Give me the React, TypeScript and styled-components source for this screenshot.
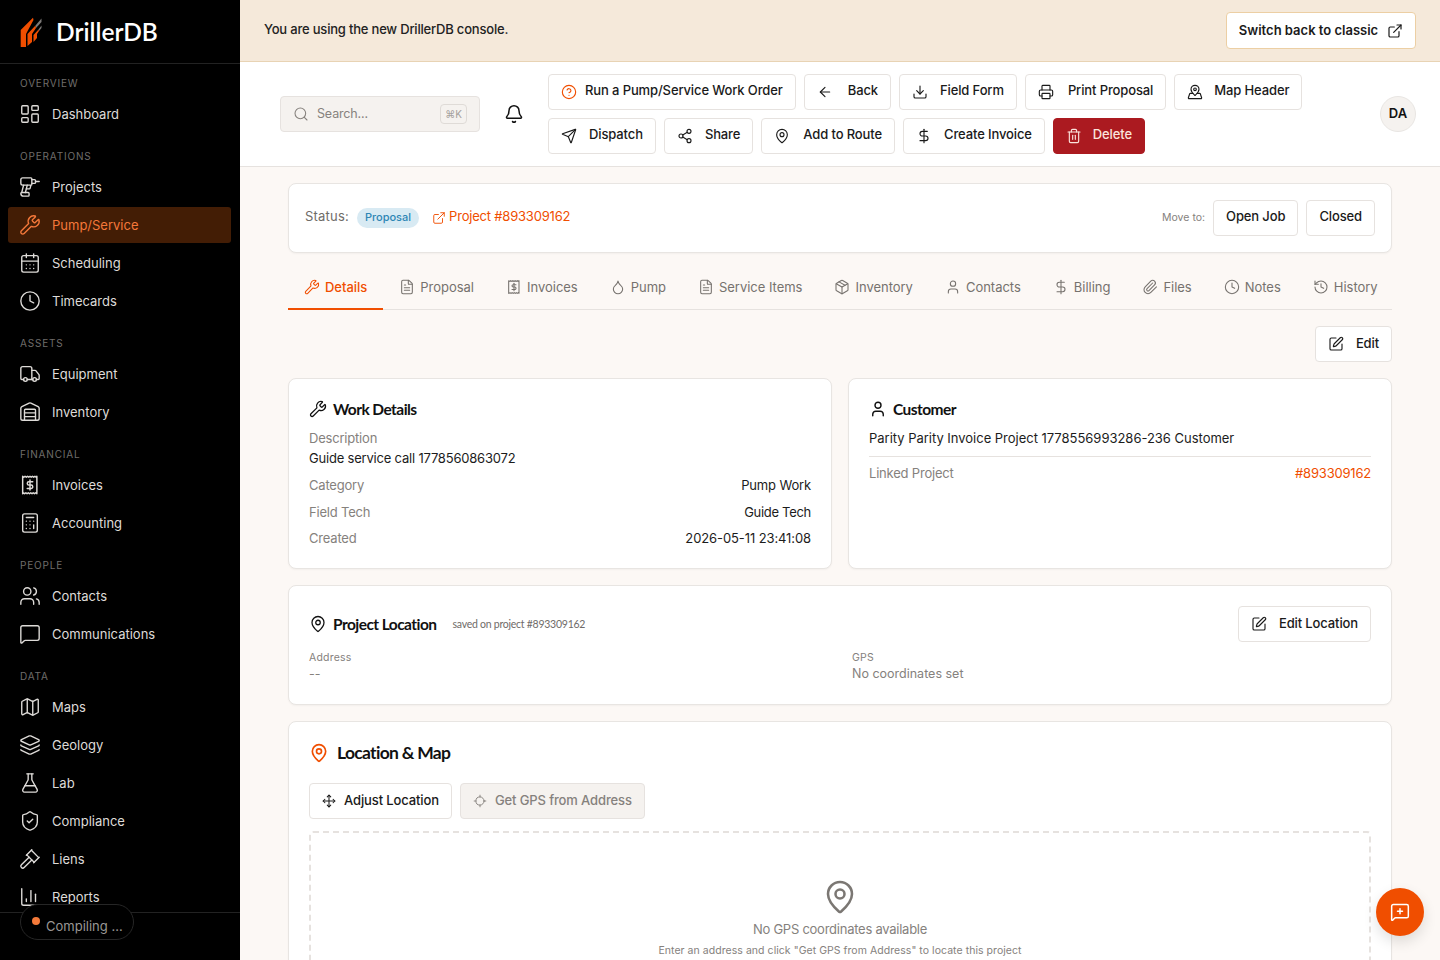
import React from 'react';
import styled, { createGlobalStyle } from 'styled-components';
import {
  ArrowLeft, Bell, Calculator, CalendarDays, ChartColumn, CircleHelp, Clock, DollarSign, Download, Drill,
  Droplet, ExternalLink, FileText, FlaskConical, Gavel, History, Layers, LayoutDashboard, Locate,
  Map as MapIcon, MapPin, MapPinned, MessageSquare, MessageSquarePlus, Move, Package, Paperclip, Printer,
  Search, Send, Share2, ShieldCheck, SquarePen, Trash2, Truck, User, Users, Warehouse, Wrench,
} from 'lucide-react';

const GlobalStyle = createGlobalStyle`
  * { box-sizing: border-box; }
  html, body { margin: 0; height: 100%; overflow: hidden; }
  body { font-family: Inter, "Liberation Sans", sans-serif; font-size: 13px; color: #111; background: #fcf8f5; }
`;

const HEADING = `Lato, Inter, sans-serif`;

const InvoiceIcon = ({ size = 24 }: { size?: number }) => (
  <svg width={size} height={size} viewBox="0 0 24 24" fill="none" stroke="currentColor" strokeWidth="1.6" strokeLinecap="round" strokeLinejoin="round">
    <path d="M4 2.5l1.3 1 1.3-1 1.4 1 1.3-1 1.4 1 1.3-1 1.3 1 1.4-1 1.3 1 1.4-1 1.3 1 .8-1V21.5l-1.3-1-1.3 1-1.4-1-1.3 1-1.4-1-1.3 1-1.3-1-1.4 1-1.3-1-1.4 1-1.3-1-.8 1z" />
    <path d="M15 8.5H10.8a1.8 1.8 0 0 0 0 3.6h2.4a1.8 1.8 0 0 1 0 3.6H9" />
    <path d="M12 6.5v11" />
  </svg>
);

const Logo = () => (
  <svg width="24" height="30" viewBox="0 0 24 30">
    <polygon fill="#f04e00" points="0.7,30 6,30 6,17 13.5,3 13,0.8 0.7,13" />
    <polygon fill="#f04e00" points="7.5,29 12,25 12,17 16,11 15.5,8.5 7.5,17" />
    <polygon fill="#7d7a78" points="15.5,8.5 16,11 21.5,5 21.5,1.5" />
    <polygon fill="#f04e00" points="13.5,25 17,21 17,17 19,14 18.5,12.5 13.5,18" />
    <polygon fill="#7d7a78" points="18.5,12.5 19,14 21.5,11 21.5,8.5" />
  </svg>
);

const Shell = styled.div`
  display: flex;
  height: 100vh;
  overflow: hidden;
`;

const Sidebar = styled.aside`
  width: 240px;
  flex: none;
  background: #000;
  display: flex;
  flex-direction: column;
  height: 100%;
`;

const Brand = styled.div`
  height: 64px;
  flex: none;
  display: flex;
  align-items: center;
  gap: 12px;
  padding: 0 20px;
  border-bottom: 1px solid #222;
  color: #fff;
  font: 600 24.5px ${HEADING};
`;

const Nav = styled.nav`
  flex: 1;
  min-height: 0;
  overflow: hidden;
  padding: 12px 9px 0 8px;
`;

const NavGroup = styled.div`
  margin-bottom: 17px;
`;

const NavLabel = styled.div`
  height: 14px;
  line-height: 14px;
  margin-bottom: 6px;
  padding-left: 12px;
  font-size: 10px;
  letter-spacing: 0.82px;
  color: #6f6d6b;
`;

const NavRow = styled.div<{ $active?: boolean }>`
  height: 36px;
  margin-bottom: 2px;
  display: flex;
  align-items: center;
  gap: 11px;
  padding-left: 11px;
  border-radius: 3px;
  font-size: 13px;
  color: ${({ $active }) => ($active ? '#f4783a' : '#dedbd8')};
  background: ${({ $active }) => ($active ? '#431d05' : 'transparent')};
  svg { flex: none; }
`;

const SideFooter = styled.div`
  height: 48px;
  flex: none;
  border-top: 1px solid #222;
`;

const CompilePill = styled.div`
  position: fixed;
  left: 20px;
  top: 904px;
  width: 114px;
  height: 36px;
  border-radius: 18px;
  border: 1px solid #262626;
  background: #000;
  display: flex;
  align-items: center;
  padding-left: 11px;
  gap: 6px;
  color: #9a9794;
  font-size: 13px;
`;

const Dot = styled.span`
  width: 8px;
  height: 8px;
  border-radius: 50%;
  background: #f47a3a;
  margin-top: -3px;
`;

const CompileText = styled.span`
  margin-top: 7px;
`;

const Main = styled.main`
  flex: 1;
  min-width: 0;
  display: flex;
  flex-direction: column;
  height: 100%;
  overflow: hidden;
`;

const Banner = styled.div`
  height: 62px;
  flex: none;
  background: #f5e9da;
  border-bottom: 1px solid #e8d3b4;
  display: flex;
  align-items: center;
  justify-content: space-between;
  padding: 0 24px;
  font-size: 13px;
  font-weight: 500;
  letter-spacing: -0.2px;
  color: #222;
`;

const BannerText = styled.span`
  margin-bottom: 4px;
`;

const ClassicButton = styled.button`
  height: 37px;
  width: 190px;
  display: flex;
  align-items: center;
  justify-content: center;
  gap: 9px;
  background: #fff;
  border: 1px solid #eccfa4;
  border-radius: 4px;
  font: 600 13px Inter, sans-serif;
  color: #1a1a1a;
`;

const Header = styled.header`
  height: 105px;
  flex: none;
  background: #fff;
  border-bottom: 1px solid #e6e2df;
  display: flex;
  align-items: center;
  padding: 0 24px 0 40px;
`;

const SearchBox = styled.div`
  width: 200px;
  height: 36px;
  flex: none;
  display: flex;
  align-items: center;
  gap: 8px;
  padding: 0 12px;
  background: #f5f2ef;
  border: 1px solid #e6e2df;
  border-radius: 4px;
  color: #87827e;
  font-size: 12.5px;
  letter-spacing: -0.15px;
`;

const SearchText = styled.span`
  flex: 1;
  margin-bottom: 2px;
`;

const Kbd = styled.span`
  width: 27px;
  height: 20px;
  display: flex;
  align-items: center;
  justify-content: center;
  border: 1px solid #dfdbd7;
  border-radius: 4px;
  font-size: 10px;
  color: #a5a19d;
`;

const BellWrap = styled.div`
  width: 68px;
  flex: none;
  display: flex;
  justify-content: center;
  color: #111;
`;

const Actions = styled.div`
  width: 800px;
  flex: none;
  display: flex;
  flex-wrap: wrap;
  gap: 8px;
`;

const Button = styled.button<{ $gap?: number; $danger?: boolean; $muted?: boolean }>`
  height: 36px;
  display: inline-flex;
  align-items: center;
  gap: ${({ $gap }) => $gap ?? 12}px;
  padding: 0 12px;
  font: 500 13px Inter, sans-serif;
  letter-spacing: -0.12px;
  white-space: nowrap;
  border-radius: 4px;
  border: 1px solid ${({ $danger }) => ($danger ? '#ab1a20' : '#e6e2df')};
  background: ${({ $danger, $muted }) => ($danger ? '#ab1a20' : $muted ? '#f5f2ef' : '#fff')};
  color: ${({ $danger, $muted }) => ($danger ? '#fbe4dc' : $muted ? '#85817d' : '#1a1a1a')};
  svg { flex: none; }
`;

const Label = styled.span<{ $lift?: number }>`
  margin-bottom: ${({ $lift }) => ($lift ?? 2) * 2}px;
`;

const Avatar = styled.div`
  width: 36px;
  height: 36px;
  margin-left: auto;
  padding-bottom: 2px;
  border-radius: 50%;
  background: #f5f2ef;
  border: 1px solid #e9e6e3;
  display: flex;
  align-items: center;
  justify-content: center;
  font-size: 13px;
  font-weight: 600;
`;

const Content = styled.div`
  flex: 1;
  min-height: 0;
  overflow: hidden;
  padding: 16px 48px 0;
  display: flex;
  flex-direction: column;
`;

const Card = styled.section`
  background: #fff;
  border: 1px solid #e8e5e2;
  border-radius: 8px;
  box-shadow: 0 1px 2px rgba(0, 0, 0, 0.04);
`;

const StatusCard = styled(Card)`
  height: 70px;
  flex: none;
  display: flex;
  align-items: center;
  padding: 0 16px;
`;

const StatusLabel = styled.span`
  color: #6f6b68;
  font-size: 13px;
  letter-spacing: 0.2px;
  margin: 0 8px 4px 0;
`;

const Pill = styled.span`
  height: 20px;
  padding: 0 8px 2px;
  display: inline-flex;
  align-items: center;
  border-radius: 10px;
  background: #d8eaf3;
  color: #2e86b5;
  font-size: 11px;
  font-weight: 500;
`;

const ProjectLink = styled.a`
  display: inline-flex;
  align-items: center;
  gap: 3px;
  margin-left: 13px;
  color: #f04e00;
  font-size: 13px;
  letter-spacing: -0.2px;
`;

const MoveTo = styled.div`
  margin-left: auto;
  display: flex;
  align-items: center;
  gap: 8px;
`;

const MoveLabel = styled.span`
  font-size: 10.5px;
  color: #85817d;
  margin-bottom: 1px;
`;

const Tabs = styled.div`
  margin-top: 13px;
  height: 44px;
  flex: none;
  display: flex;
  border-bottom: 1px solid #e6e2df;
`;

const Tab = styled.div<{ $active?: boolean }>`
  height: 44px;
  display: flex;
  align-items: center;
  gap: 5px;
  padding: 0 16px;
  white-space: nowrap;
  font-size: 13px;
  letter-spacing: -0.02px;
  font-weight: ${({ $active }) => ($active ? 500 : 400)};
  color: ${({ $active }) => ($active ? '#f04e00' : '#76726e')};
  border-bottom: 2px solid ${({ $active }) => ($active ? '#f04e00' : 'transparent')};
`;

const EditRow = styled.div`
  margin: 16px 0;
  flex: none;
  display: flex;
  justify-content: flex-end;
`;

const TwoCols = styled.div`
  display: grid;
  grid-template-columns: 1fr 1fr;
  gap: 16px;
  flex: none;
`;

const InfoCard = styled(Card)`
  height: 191px;
  padding: 21px 20px 20px;
`;

const CardTitle = styled.h3<{ $large?: boolean }>`
  margin: 0;
  display: flex;
  align-items: center;
  gap: ${({ $large }) => ($large ? 8 : 6)}px;
  font: 700 ${({ $large }) => ($large ? 17.5 : 15.5)}px ${HEADING};
  letter-spacing: ${({ $large }) => ($large ? -0.7 : -0.55)}px;
  color: #111;
`;

const Muted = styled.div`
  color: #85817d;
  font-size: 13px;
  letter-spacing: -0.2px;
`;

const Value = styled.div<{ $spacing?: number }>`
  color: #1c1c1c;
  font-size: 13px;
  letter-spacing: ${({ $spacing }) => $spacing ?? -0.02}px;
`;

const DescBlock = styled.div`
  margin-top: 10px;
  line-height: 20px;
`;

const KV = styled.div`
  display: flex;
  justify-content: space-between;
  height: 26.4px;
  align-items: center;
`;

const KVList = styled.div`
  margin-top: 4px;
`;

const CustomerName = styled(Value)`
  margin-top: 10px;
  line-height: 20px;
  padding-bottom: 8px;
  border-bottom: 1px solid #e6e2df;
`;

const LinkedRow = styled.div`
  display: flex;
  justify-content: space-between;
  margin-top: 7px;
  line-height: 18px;
`;

const OrangeText = styled.span`
  color: #f04e00;
  letter-spacing: -0.2px;
`;

const LocationCard = styled(Card)`
  margin-top: 16px;
  height: 120px;
  flex: none;
  padding: 20px;
`;

const LocationHead = styled.div`
  display: flex;
  align-items: center;
  height: 36px;
`;

const SavedNote = styled.span`
  margin-left: 16px;
  font: 400 10.5px ${HEADING};
  letter-spacing: -0.25px;
  color: #6f6b68;
`;

const PushRight = styled.div`
  margin-left: auto;
`;

const AddressGrid = styled.div`
  display: grid;
  grid-template-columns: 1fr 1fr;
  column-gap: 24px;
  margin-top: 9px;
`;

const SmallLabel = styled.div`
  color: #85817d;
  font-size: 10.5px;
  letter-spacing: 0.2px;
  line-height: 14px;
`;

const SmallValue = styled.div`
  color: #85817d;
  font-size: 12.5px;
  line-height: 18px;
`;

const MapCard = styled(Card)`
  margin-top: 16px;
  flex: none;
  padding: 20px;
  height: 320px;
`;

const MapTitleRow = styled.div`
  height: 24px;
`;

const MapButtons = styled.div`
  display: flex;
  gap: 8px;
  margin-top: 17px;
`;

const EmptyMap = styled.div`
  margin-top: 12px;
  height: 240px;
  border: 2px dashed #e6e2df;
  border-radius: 4px;
  display: flex;
  flex-direction: column;
  align-items: center;
  padding-top: 46px;
  color: #7b7773;
`;

const EmptyTitle = styled.div`
  margin-top: 6px;
  font-size: 13px;
  letter-spacing: -0.25px;
  color: #85817d;
`;

const EmptyHint = styled.div`
  margin-top: 7px;
  font-size: 10.5px;
  letter-spacing: 0.05px;
  color: #85817d;
`;

const Fab = styled.button`
  position: fixed;
  left: 1376px;
  top: 888px;
  width: 48px;
  height: 48px;
  border-radius: 50%;
  border: none;
  background: #f04e00;
  color: #fff;
  display: flex;
  align-items: center;
  justify-content: center;
  box-shadow: 0 6px 14px rgba(0, 0, 0, 0.12);
`;

const navGroups = [
  { label: 'OVERVIEW', items: [{ name: 'Dashboard', icon: <LayoutDashboard size={22} strokeWidth={1.5} /> }] },
  {
    label: 'OPERATIONS',
    items: [
      { name: 'Projects', icon: <Drill size={22} strokeWidth={1.5} /> },
      { name: 'Pump/Service', icon: <Wrench size={22} strokeWidth={1.5} />, active: true },
      { name: 'Scheduling', icon: <CalendarDays size={22} strokeWidth={1.5} /> },
      { name: 'Timecards', icon: <Clock size={22} strokeWidth={1.5} /> },
    ],
  },
  {
    label: 'ASSETS',
    items: [
      { name: 'Equipment', icon: <Truck size={22} strokeWidth={1.5} /> },
      { name: 'Inventory', icon: <Warehouse size={22} strokeWidth={1.5} /> },
    ],
  },
  {
    label: 'FINANCIAL',
    items: [
      { name: 'Invoices', icon: <InvoiceIcon size={22} /> },
      { name: 'Accounting', icon: <Calculator size={22} strokeWidth={1.5} /> },
    ],
  },
  {
    label: 'PEOPLE',
    items: [
      { name: 'Contacts', icon: <Users size={22} strokeWidth={1.5} /> },
      { name: 'Communications', icon: <MessageSquare size={22} strokeWidth={1.5} /> },
    ],
  },
  {
    label: 'DATA',
    items: [
      { name: 'Maps', icon: <MapIcon size={22} strokeWidth={1.5} /> },
      { name: 'Geology', icon: <Layers size={22} strokeWidth={1.5} /> },
      { name: 'Lab', icon: <FlaskConical size={22} strokeWidth={1.5} /> },
      { name: 'Compliance', icon: <ShieldCheck size={22} strokeWidth={1.5} /> },
      { name: 'Liens', icon: <Gavel size={22} strokeWidth={1.5} /> },
      { name: 'Reports', icon: <ChartColumn size={22} strokeWidth={1.5} /> },
    ],
  },
];

const tabs = [
  { name: 'Details', icon: <Wrench size={16} strokeWidth={1.6} />, active: true },
  { name: 'Proposal', icon: <FileText size={16} strokeWidth={1.6} /> },
  { name: 'Invoices', icon: <InvoiceIcon size={16} /> },
  { name: 'Pump', icon: <Droplet size={16} strokeWidth={1.6} /> },
  { name: 'Service Items', icon: <FileText size={16} strokeWidth={1.6} /> },
  { name: 'Inventory', icon: <Package size={16} strokeWidth={1.6} /> },
  { name: 'Contacts', icon: <User size={16} strokeWidth={1.6} /> },
  { name: 'Billing', icon: <DollarSign size={16} strokeWidth={1.6} /> },
  { name: 'Files', icon: <Paperclip size={16} strokeWidth={1.6} /> },
  { name: 'Notes', icon: <Clock size={16} strokeWidth={1.6} /> },
  { name: 'History', icon: <History size={16} strokeWidth={1.6} /> },
];

const actions = [
  { name: 'Back', gap: 15, icon: <ArrowLeft size={16} strokeWidth={1.7} /> },
  { name: 'Field Form', gap: 12, icon: <Download size={16} strokeWidth={1.7} /> },
  { name: 'Print Proposal', gap: 14, icon: <Printer size={16} strokeWidth={1.7} /> },
  { name: 'Map Header', gap: 11, icon: <MapPinned size={16} strokeWidth={1.7} /> },
  { name: 'Dispatch', gap: 12, icon: <Send size={16} strokeWidth={1.7} /> },
  { name: 'Share', gap: 12, icon: <Share2 size={16} strokeWidth={1.7} /> },
  { name: 'Add to Route', gap: 13, icon: <MapPin size={16} strokeWidth={1.7} /> },
  { name: 'Create Invoice', gap: 12, icon: <DollarSign size={16} strokeWidth={1.7} /> },
];

export default function App() {
  return (
    <Shell>
      <GlobalStyle />
      <Sidebar>
        <Brand>
          <Logo />
          DrillerDB
        </Brand>
        <Nav>
          {navGroups.map((group) => (
            <NavGroup key={group.label}>
              <NavLabel>{group.label}</NavLabel>
              {group.items.map((item: any) => (
                <NavRow key={item.name} $active={item.active}>
                  {item.icon}
                  {item.name}
                </NavRow>
              ))}
            </NavGroup>
          ))}
        </Nav>
        <SideFooter />
      </Sidebar>
      <CompilePill>
        <Dot />
        <CompileText>Compiling ...</CompileText>
      </CompilePill>
      <Main>
        <Banner>
          <BannerText>You are using the new DrillerDB console.</BannerText>
          <ClassicButton>
            <Label $lift={1}>Switch back to classic</Label>
            <ExternalLink size={16} strokeWidth={1.8} />
          </ClassicButton>
        </Banner>
        <Header>
          <SearchBox>
            <Search size={16} strokeWidth={1.6} />
            <SearchText>Search...</SearchText>
            <Kbd>⌘K</Kbd>
          </SearchBox>
          <BellWrap>
            <Bell size={20} strokeWidth={1.8} />
          </BellWrap>
          <Actions>
            <Button $gap={8}>
              <CircleHelp size={16} strokeWidth={1.7} color="#f04e00" />
              <Label>Run a Pump/Service Work Order</Label>
            </Button>
            {actions.map((action) => (
              <Button key={action.name} $gap={action.gap}>
                {action.icon}
                <Label>{action.name}</Label>
              </Button>
            ))}
            <Button $danger $gap={11}>
              <Trash2 size={16} strokeWidth={1.7} />
              <Label>Delete</Label>
            </Button>
          </Actions>
          <Avatar>DA</Avatar>
        </Header>
        <Content>
          <StatusCard>
            <StatusLabel>Status:</StatusLabel>
            <Pill>Proposal</Pill>
            <ProjectLink>
              <ExternalLink size={14} strokeWidth={1.6} />
              <Label>Project #893309162</Label>
            </ProjectLink>
            <MoveTo>
              <MoveLabel>Move to:</MoveLabel>
              <Button>
                <Label>Open Job</Label>
              </Button>
              <Button>
                <Label>Closed</Label>
              </Button>
            </MoveTo>
          </StatusCard>
          <Tabs>
            {tabs.map((tab) => (
              <Tab key={tab.name} $active={tab.active}>
                {tab.icon}
                {tab.name}
              </Tab>
            ))}
          </Tabs>
          <EditRow>
            <Button>
              <SquarePen size={16} strokeWidth={1.7} />
              <Label $lift={1}>Edit</Label>
            </Button>
          </EditRow>
          <TwoCols>
            <InfoCard>
              <CardTitle>
                <Wrench size={18} strokeWidth={1.7} />
                Work Details
              </CardTitle>
              <DescBlock>
                <Muted>Description</Muted>
                <Value $spacing={-0.2}>Guide service call 1778560863072</Value>
              </DescBlock>
              <KVList>
                <KV>
                  <Muted>Category</Muted>
                  <Value $spacing={-0.15}>Pump Work</Value>
                </KV>
                <KV>
                  <Muted>Field Tech</Muted>
                  <Value $spacing={-0.3}>Guide Tech</Value>
                </KV>
                <KV>
                  <Muted>Created</Muted>
                  <Value $spacing={-0.1}>2026-05-11 23:41:08</Value>
                </KV>
              </KVList>
            </InfoCard>
            <InfoCard>
              <CardTitle>
                <User size={18} strokeWidth={1.9} />
                Customer
              </CardTitle>
              <CustomerName>Parity Parity Invoice Project 1778556993286-236 Customer</CustomerName>
              <LinkedRow>
                <Muted>Linked Project</Muted>
                <OrangeText>#893309162</OrangeText>
              </LinkedRow>
            </InfoCard>
          </TwoCols>
          <LocationCard>
            <LocationHead>
              <CardTitle>
                <MapPin size={18} strokeWidth={1.7} />
                Project Location
              </CardTitle>
              <SavedNote>saved on project #893309162</SavedNote>
              <PushRight>
                <Button>
                  <SquarePen size={16} strokeWidth={1.7} />
                  <Label $lift={1}>Edit Location</Label>
                </Button>
              </PushRight>
            </LocationHead>
            <AddressGrid>
              <div>
                <SmallLabel>Address</SmallLabel>
                <SmallValue>--</SmallValue>
              </div>
              <div>
                <SmallLabel>GPS</SmallLabel>
                <SmallValue>No coordinates set</SmallValue>
              </div>
            </AddressGrid>
          </LocationCard>
          <MapCard>
            <MapTitleRow>
              <CardTitle $large>
                <MapPin size={20} strokeWidth={2} color="#f04e00" />
                Location &amp; Map
              </CardTitle>
            </MapTitleRow>
            <MapButtons>
              <Button $gap={8}>
                <Move size={14} strokeWidth={1.8} />
                <Label $lift={1}>Adjust Location</Label>
              </Button>
              <Button $gap={8} $muted>
                <Locate size={14} strokeWidth={1.6} />
                <Label $lift={1}>Get GPS from Address</Label>
              </Button>
            </MapButtons>
            <EmptyMap>
              <MapPin size={36} strokeWidth={1.7} />
              <EmptyTitle>No GPS coordinates available</EmptyTitle>
              <EmptyHint>Enter an address and click "Get GPS from Address" to locate this project</EmptyHint>
            </EmptyMap>
          </MapCard>
        </Content>
      </Main>
      <Fab>
        <MessageSquarePlus size={20} strokeWidth={1.8} />
      </Fab>
    </Shell>
  );
}
